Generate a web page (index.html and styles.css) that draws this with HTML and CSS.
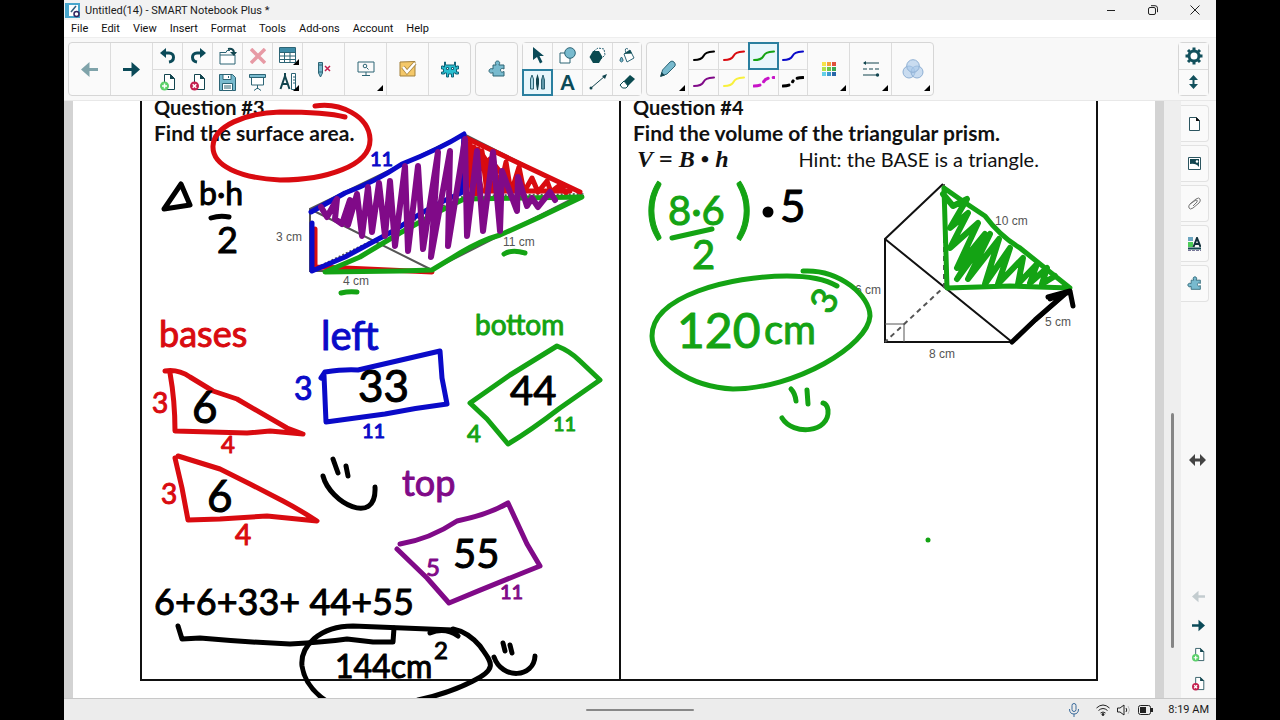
FILE: index.html
```html
<!DOCTYPE html>
<html lang="en">
    <head>
        <meta charset="utf-8">
        <title>Untitled(14) - SMART Notebook Plus *</title>
        <link rel="stylesheet" href="styles.css">
    </head>
    <body>
        <!-- shared icons -->
        <svg class="sprite" aria-hidden="true">
            <symbol id="arrow" viewBox="0 0 16 16"><path fill="currentColor" d="M0 6.500h8V1l8 7-8 7V9.500H0z"/></symbol>
            <symbol id="undo" viewBox="0 0 16 16"><path fill="none" stroke="currentColor" stroke-width="3" d="M4 5h5c6 0 6 8 0 9"/><path fill="currentColor" d="M0 5l6-5v10z"/></symbol>
            <symbol id="page" viewBox="0 0 16 18"><path fill="#fff" stroke="#12454f" d="M4.500 1.500h6l4 4v11h-10z"/><path fill="#12454f" d="M10 1l5 5h-5z"/></symbol>
            <symbol id="page-add" viewBox="0 0 16 18"><use href="#page" width="16" height="18"/><circle cx="4.500" cy="13" r="4.500" fill="#5bd06a"/><path stroke="#fff" stroke-width="1.500" d="M2 13h5M4.500 10.500v5"/></symbol>
            <symbol id="page-del" viewBox="0 0 16 18"><use href="#page" width="16" height="18"/><circle cx="4.500" cy="13" r="4.500" fill="#c4204f"/><path stroke="#fff" stroke-width="1.500" d="M2.700 11.200l3.600 3.600M6.300 11.200l-3.600 3.600"/></symbol>
            <symbol id="puzzle" viewBox="0 0 18 18"><path fill="#78bace" stroke="#2c6475" stroke-linejoin="round" d="M5 5h3.200C6.500 3 7.500 1 9.500 1s3 2 1.300 4H16v4c-2-1.200-3.500-.5-3.500 1.200S14 12.700 16 11.500V16H5v-3.500C3 14 1 12.500 1 10.800S3 8 5 9z"/></symbol>
            <symbol id="stroke" viewBox="0 0 22 12"><path fill="none" stroke="currentColor" stroke-linecap="round" d="M1 10c5 0 8-1 9.500-4S14 2 21 1.500"/></symbol>
            <symbol id="pencil" viewBox="0 0 18 18"><path fill="#78bace" stroke="#2c6475" d="M2 16l1.500-6L11 2q2-2 4 0t1 4L8 14z"/><path fill="#12454f" d="M1 17l1.500-5 3.500 3.500z"/></symbol>
        </svg>

        <div class="app">
            <header class="titlebar">
                <svg class="logo" width="15" height="15" viewBox="0 0 15 15"><rect x="1" y="1" width="13" height="13" fill="#fff" stroke="#49a6cc" stroke-width="2"/><path stroke="#49a6cc" stroke-width="2" d="M3 1v13"/><path stroke="#2f5c7d" stroke-width="1.500" d="M6 9l5-6"/><circle cx="11.500" cy="11" r="2.500" fill="#fff" stroke="#32235e" stroke-width="1.500"/></svg>
                <span class="title">Untitled(14) - SMART Notebook Plus *</span>
                <button aria-label="Minimize"><svg width="10" height="10"><path stroke="#222" d="M1 5.500h8"/></svg></button>
                <button aria-label="Restore"><svg width="10" height="10" fill="none" stroke="#222"><rect x=".5" y="2.500" width="7" height="7" rx="1.500"/><path d="M3 .7h4q2.500 0 2.500 2.500v4"/></svg></button>
                <button aria-label="Close"><svg width="10" height="10"><path stroke="#222" d="M.5.5l9 9M9.500.5l-9 9"/></svg></button>
            </header>

            <nav class="menu">
                <a href="#">File</a>
                <a href="#">Edit</a>
                <a href="#">View</a>
                <a href="#">Insert</a>
                <a href="#">Format</a>
                <a href="#">Tools</a>
                <a href="#">Add-ons</a>
                <a href="#">Account</a>
                <a href="#">Help</a>
            </nav>

            <div class="toolbar">
                <div class="group">
                    <button class="tall faded" aria-label="Previous page"><svg class="flip" width="17" height="17"><use href="#arrow"/></svg></button>
                    <button class="tall" aria-label="Next page"><svg width="17" height="17"><use href="#arrow"/></svg></button>
                    <div class="grid five">
                        <button aria-label="Undo"><svg width="16" height="16"><use href="#undo"/></svg></button>
                        <button aria-label="Redo"><svg class="flip" width="16" height="16"><use href="#undo"/></svg></button>
                        <button aria-label="Open"><svg width="18" height="18" fill="#fff" stroke="#2c6475"><path d="M1 5.500h6l1-2h3M1 5v12h15V8M1 8h15" /><path fill="none" stroke="#12454f" stroke-width="2" d="M9 2q5-1 6 3"/><path fill="#12454f" stroke="none" d="M11 5h7l-3 4z"/></svg></button>
                        <button aria-label="Delete"><svg width="16" height="16"><path stroke="#e79aa5" stroke-width="3.500" d="M1 1l14 14M15 1L1 15"/></svg></button>
                        <button class="more" aria-label="Table"><svg width="17" height="17"><path fill="#fff" stroke="#2c6475" d="M.5.5h16v15H.5zM.5 5.500h16M.5 9h16M.5 12.500h16M5.500 5v11M11 5v11"/><path fill="#3e8ba6" d="M1 1h15v4H1z"/></svg></button>
                        <button aria-label="Add page"><svg width="16" height="18"><use href="#page-add"/></svg></button>
                        <button aria-label="Delete page"><svg width="16" height="18"><use href="#page-del"/></svg></button>
                        <button aria-label="Save"><svg width="17" height="17"><path fill="#78bace" stroke="#2c6475" d="M.5.5h13l3 3v13H.5z"/><path fill="#fff" stroke="#2c6475" d="M4 .5h8v5H4zM3.500 9.500h10v7h-10z"/><path stroke="#2c6475" d="M9.500 2v2M5 12h7M5 14h7"/></svg></button>
                        <button aria-label="Screen shade"><svg width="17" height="17"><path fill="#fff" stroke="#2c6475" d="M2.500 3v8h12V3M8.500 11v4M5 16.500l3.500-2.500 3.500 2.500"/><path fill="#78bace" stroke="#2c6475" d="M.5.5h16v3H.5z"/></svg></button>
                        <button class="more" aria-label="Measurement tools"><svg width="18" height="18"><path fill="none" stroke="#12454f" stroke-width="2" d="M6 3L1.500 16M6 3l4.500 13M3 11h6M6 0v4"/><path fill="#fff" stroke="#2c6475" d="M12.500.5h4v16h-4zM14 4h2M14 7h2M14 10h2"/></svg></button>
                    </div>
                    <button class="tall" aria-label="Clear ink"><svg width="14" height="17"><path fill="#78bace" stroke="#2c6475" d="M1.500 3V1.500h4V12l-2 4-2-4zM1.500 4h4M1.500 11h4"/><path stroke="#c4204f" stroke-width="1.500" d="M8 5l5 5M13 5l-5 5"/></svg></button>
                    <button class="tall more" aria-label="Display"><svg width="18" height="16" fill="none" stroke="#2c6475"><path d="M1 1h16v10H1zM9 11v3M5 14.500h8"/><circle cx="8" cy="5" r="1.800"/><path d="M9.500 6.500l2 2"/></svg></button>
                    <button class="tall" aria-label="Activities"><svg width="18" height="18"><path fill="#f4c869" stroke="#a3813d" d="M1 2l15-.5V16H1z"/><path fill="none" stroke="#a3813d" stroke-width="4" d="M4 7l4 5 8-9"/><path fill="none" stroke="#fff" stroke-width="2.500" d="M4 7l4 5 8-9"/></svg></button>
                    <button class="tall" aria-label="Game"><svg width="18" height="17"><path fill="#29bfd0" stroke="#12647a" d="M3.500 3V1h1v3h9V1h1v5h1V5h2v3h-2v3h2v2h-3v-1h-2v4h-2v-3H7.500v3h-2v-4h-2v1h-3v-2h2V8h-2V5h2v1h1z"/><path fill="#fff" stroke="#12647a" d="M5.500 6.500h2v2h-2zM10.500 6.500h2v2h-2z"/></svg></button>
                </div>

                <div class="group">
                    <button class="tall" aria-label="Add-ons"><svg width="18" height="18"><use href="#puzzle"/></svg></button>
                </div>

                <div class="group">
                    <div class="grid four">
                        <button aria-label="Select"><svg width="12" height="17"><path fill="currentColor" d="M1 0l11 9H7.500l3 6-2.500 1.500-3-6.500L1 13z"/></svg></button>
                        <button aria-label="Shapes"><svg width="17" height="17" stroke="#2c6475"><path fill="#fff" d="M1 6h10v10H1z"/><circle cx="11" cy="6" r="5.300" fill="#78bace"/></svg></button>
                        <button aria-label="Polygons"><svg width="17" height="17"><path fill="#fff" stroke="#2c6475" stroke-dasharray="2 1" d="M5 4l4-3 6 1 1 6-5 5"/><path fill="#0b4a50" d="M4 4h6l3.500 6-3.500 6H4L.5 10z"/></svg></button>
                        <button aria-label="Fill"><svg width="16" height="17"><path fill="#fff" stroke="#2c6475" d="M5 7l6-4 4 8-7 4zM7 6q-2-6 2-4"/><path fill="#78bace" stroke="#2c6475" d="M2.500 10q3 4 0 5-3-1 0-5z"/><path fill="#0b4a50" d="M5 7l8-.500L11 3z"/></svg></button>
                        <button class="on" aria-label="Pens"><svg width="17" height="16"><path fill="#a7d3e0" stroke="#2c6475" d="M1.500 5L3 1l1.500 4v10h-3z"/><path fill="#12454f" d="M7 5l1.500-5L10 5v5l-1 6H8l-1-6z"/><path fill="#5f98a9" stroke="#2c6475" d="M12.500 6L14 1l1.500 5v9h-3z"/></svg></button>
                        <button class="letter" aria-label="Text">A</button>
                        <button aria-label="Line"><svg width="18" height="16"><path stroke="#12454f" d="M2 14L16 2"/><circle cx="2" cy="14" r="1.500" fill="#12454f"/><path fill="#12454f" d="M18 0l-2 5-3-3z"/></svg></button>
                        <button aria-label="Eraser"><svg width="16" height="14"><path fill="#0b4a50" d="M5 6l6-6 5 4-7 7z"/><path fill="#fff" stroke="#0b4a50" d="M5 6L1 10l2.500 3H7l2-2z"/></svg></button>
                    </div>
                </div>

                <div class="group">
                    <button class="tall more" aria-label="Pen type"><svg width="18" height="18"><use href="#pencil"/></svg></button>
                    <div class="grid four pens">
                        <button class="ink-black" aria-label="Black pen"><svg width="22" height="12"><use href="#stroke"/></svg></button>
                        <button class="ink-red" aria-label="Red pen"><svg width="22" height="12"><use href="#stroke"/></svg></button>
                        <button class="ink-green on" aria-label="Green pen"><svg width="22" height="12"><use href="#stroke"/></svg></button>
                        <button class="ink-blue" aria-label="Blue pen"><svg width="22" height="12"><use href="#stroke"/></svg></button>
                        <button class="ink-purple" aria-label="Purple pen"><svg width="22" height="12"><use href="#stroke"/></svg></button>
                        <button class="ink-yellow" aria-label="Yellow highlighter"><svg width="22" height="12"><use href="#stroke"/></svg></button>
                        <button class="ink-magenta dashed" aria-label="Magenta dashes"><svg width="22" height="12"><use href="#stroke"/></svg></button>
                        <button class="ink-black dashed dotted" aria-label="Black dashes"><svg width="22" height="12"><use href="#stroke"/></svg></button>
                    </div>
                    <button class="tall more" aria-label="Colour"><svg width="14" height="14"><path fill="#f7e34a" d="M0 0h4v4H0z"/><path fill="#f5a03c" d="M5 0h4v4H5z"/><path fill="#e0503c" d="M10 0h4v4h-4z"/><path fill="#b4e04a" d="M0 5h4v4H0z"/><path fill="#6cc644" d="M5 5h4v4H5z"/><path fill="#3da850" d="M10 5h4v4h-4z"/><path fill="#62cfe8" d="M0 10h4v4H0z"/><path fill="#3c9ad0" d="M5 10h4v4H5z"/><path fill="#2766a8" d="M10 10h4v4h-4z"/></svg></button>
                    <button class="tall more" aria-label="Line style"><svg width="18" height="16"><path stroke="#12454f" d="M2 2h15M1 14h14"/><path stroke="#12454f" stroke-dasharray="4 2" d="M1 8h16"/><path fill="#12454f" d="M1 2l3-2v4z"/><circle cx="15.500" cy="14" r="1.700" fill="#12454f"/></svg></button>
                    <button class="tall more" aria-label="Transparency"><svg width="22" height="20" fill="#a9c8ea" fill-opacity=".6" stroke="#8fb0d4"><circle cx="7" cy="13" r="6"/><circle cx="15" cy="13" r="6"/><circle cx="11" cy="7" r="6.300"/></svg></button>
                </div>

                <div class="group right">
                    <div class="grid one">
                        <button aria-label="Settings"><svg width="18" height="18" viewBox="-9 -9 18 18"><circle r="5" fill="#fff" stroke="#12505c" stroke-width="3"/><path stroke="#12505c" stroke-width="3" d="M0-8.500v3M0 8.500v-3M-8.500 0h3M8.500 0h-3M-6-6l2 2M6-6l-2 2M-6 6l2-2M6 6l-2-2"/></svg></button>
                        <button aria-label="Move toolbar"><svg width="9" height="14"><path fill="#12505c" d="M4.500 0L9 5H5.500v4H9l-4.500 5L0 9h3.500V5H0z"/></svg></button>
                    </div>
                </div>
            </div>

            <main class="workspace">
                <div class="gutter"></div>
                <div class="sheet">
                    <div class="worksheet">
                        <section class="cell">
                            <h2>Question #3</h2>
                            <h3>Find the surface area.</h3>
                        </section>
                        <section class="cell">
                            <h2>Question #4</h2>
                            <h3>Find the volume of the triangular prism.</h3>
                            <p><span class="formula"><i>V</i> = <i>B</i> • <i>h</i></span><span>Hint: the BASE is a triangle.</span></p>
                        </section>
                    </div>

                    <!-- figures and pen strokes lie over the worksheet -->
                    <svg class="drawing" viewBox="73 100 1082 597" preserveAspectRatio="xMinYMin meet">
                        <g class="figure">
                            <path d="M310 208L464 133 582 193 430 270H310zM310 208L430 268"/>
                            <path stroke-dasharray="2 2" d="M310 270L464 195 582 193"/>
                            <path class="solid" d="M943 183L885 238V341H1012L885 238M1012 341L1070 290"/>
                            <path stroke-dasharray="5 4" d="M944 183V286L885 341"/>
                            <path class="thin" d="M885 323h19v18"/>
                        </g>
                        <g class="label">
                            <text x="276" y="240">3 cm</text>
                            <text x="343" y="284">4 cm</text>
                            <text x="503" y="245">11 cm</text>
                            <text x="995" y="224">10 cm</text>
                            <text x="1045" y="325">5 cm</text>
                            <text x="929" y="357">8 cm</text>
                            <text x="855" y="293">6 cm</text>
                        </g>

                        <!-- question 3, the prism -->
                        <g class="pen ink-red">
                            <path d="M315 105C340 101 369 115 370 138C371 165 325 179 280 179C240 177 212 165 213 145C214 125 245 112 280 111C305 111 330 112 345 116"/>
                            <path d="M315 228V266L345 267 432 271"/>
                            <path d="M466 137L580 191M466 194L470 146 476 193 482 150 487 192 493 156 499 192 506 161 511 192 519 166 524 191 532 177 538 191 547 180 551 191 560 184 566 192"/>
                            <path d="M466 140L472 190M470 143L482 190M474 146L495 190M480 150L505 188M466 150V190M490 158L515 190M472 190H570M478 148V190M488 160V188"/>
                        </g>
                        <g class="pen ink-green">
                            <path d="M325 271L360 256 400 232 440 210 464 198 582 196 540 216 500 234Q482 239 460 252L432 269 400 270z"/>
                            <path d="M341 292Q349 290 357 291M504 253Q512 248 525 252"/>
                        </g>
                        <g class="pen ink-blue">
                            <path d="M311 211L345 192Q375 181 402 163Q440 148 464 133L461 192Q430 205 395 229L345 256 312 270V222"/>
                        </g>
                        <g class="pen thick ink-purple">
                            <path d="M321 206L327 216 337 198 335 218 342 223 350 199 348 224 357 193 362 235 368 186 372 231 379 182 385 235 390 180 395 245 405 165 408 250 418 165 423 248 438 151 431 256 450 150 448 245 465 138 467 235 477 150 483 230 493 151 500 230 502 170 517 210 518 176 527 205 532 197 538 206 550 191 555 199"/>
                        </g>
                        <g class="pen ink-black">
                            <path d="M164 208L181 183 190 204zM211 217Q220 214 229 216"/>
                        </g>

                        <!-- question 3, the nets -->
                        <g class="pen ink-red">
                            <path d="M165 370Q178 368 190 376L213 390Q225 394 237 398L287 427 303 433 270 430 247 432 175 430Q175 400 170 372"/>
                            <path d="M178 455L220 468 250 483 283 500Q300 509 317 520L267 515 220 518 188 519 182 487 175 457"/>
                        </g>
                        <g class="pen ink-blue"><path d="M321 377L325 371Q345 368 358 369L440 350 442 377 447 403Q415 407 385 413Q355 417 326 421L324 374"/></g>
                        <g class="pen ink-green"><path d="M470 402L510 374 557 345Q570 350 580 360L600 379 560 407Q530 430 508 443L487 418z"/></g>
                        <g class="pen ink-purple"><path d="M400 543Q430 538 457 520Q490 513 508 502L527 543 540 565Q495 583 449 602L427 577 397 548"/></g>
                        <g class="pen ink-black">
                            <path d="M323 475C330 502 377 526 375 486M333 458L338 472M346 465L348 475"/>
                            <path d="M178 625L182 638 200 637Q245 641 290 643Q325 641 347 638L373 641H393L394 627"/>
                            <path d="M458 635Q445 626 430 632M453 629L353 625C320 625 300 645 302 665Q305 685 325 699M418 699Q450 692 473 680C500 667 490 660 480 645Q468 631 453 628"/>
                            <path d="M494 656C502 679 534 677 535 655M503 642L505 650M510 644L512 652"/>
                        </g>

                        <!-- question 4 -->
                        <g class="pen ink-green">
                            <path d="M672 237L712 228"/>
                            <path d="M803 270C840 268 870 295 870 315C868 345 795 388 733 388C690 386 652 360 652 335C652 295 730 275 787 275Q820 275 837 285"/>
                            <path d="M791 388Q795 392 796 400M807 389L808 403M782 417C793 435 830 432 828 409Q827 403 823 402"/>
                            <path d="M944 187L947 287 1010 285 1070 287 1020 247Q1000 235 985 215Q965 202 944 187"/>
                            <path d="M928 539V539"/>
                        </g>
                        <g class="pen thick ink-green">
                            <path d="M943 193L953 205 967 198 950 227 968 212 950 247 978 222 957 267 985 233 957 278 990 233 968 278 999 238 985 283 1010 247 998 283 1023 257 1018 283 1037 263 1030 282 1047 267 1042 283 1055 275"/>
                        </g>
                        <g class="pen ink-black">
                            <path d="M1012 341L1035 319 1066 292M1048 296L1070 290 1073 305M1050 298L1070 291"/>
                            <circle class="dot" cx="768" cy="211" r="3"/>
                        </g>

                        <!-- handwriting -->
                        <g class="hand ink-black">
                            <text class="s32" x="199" y="204">b·h</text>
                            <text class="s36" x="217" y="252">2</text>
                            <text class="s44" x="192" y="422">6</text>
                            <text class="s44" x="207" y="511">6</text>
                            <text class="s44" x="358" y="401">33</text>
                            <text class="s40" x="510" y="404">44</text>
                            <text class="s40" x="453" y="567">55</text>
                            <text class="s36" x="154" y="614">6+6+33+ 44+55</text>
                            <text class="s32" x="335" y="677">144cm</text>
                            <text class="s24" x="434" y="658">2</text>
                            <text class="s44" x="780" y="221">5</text>
                        </g>
                        <g class="hand ink-red">
                            <text class="s36" x="159" y="346">bases</text>
                            <text class="s28" x="152" y="412">3</text>
                            <text class="s28" x="161" y="503">3</text>
                            <text class="s24" x="221" y="452">4</text>
                            <text class="s28" x="235" y="544">4</text>
                        </g>
                        <g class="hand ink-blue">
                            <text class="s20" x="370" y="165">11</text>
                            <text class="s40" x="321" y="349">left</text>
                            <text class="s32" x="294" y="399">3</text>
                            <text class="s20" x="362" y="437">11</text>
                        </g>
                        <g class="hand ink-green">
                            <text class="s28" x="475" y="334">bottom</text>
                            <text class="s24" x="467" y="441">4</text>
                            <text class="s20" x="553" y="430">11</text>
                            <text class="s64" x="646" y="230">(</text>
                            <text class="s40" x="668" y="224">8·6</text>
                            <text class="s64" x="735" y="230">)</text>
                            <text class="s40" x="692" y="268">2</text>
                            <text class="s48" x="677" y="347">120</text>
                            <text class="s40" x="764" y="343">cm</text>
                            <text class="s36" transform="translate(830 315) rotate(-60)">3</text>
                        </g>
                        <g class="hand ink-purple">
                            <text class="s36" x="402" y="495">top</text>
                            <text class="s24" x="426" y="575">5</text>
                            <text class="s20" x="500" y="598">11</text>
                        </g>
                    </svg>
                </div>
                <div class="gutter"></div>
                <div class="scroll"><div class="thumb"></div></div>

                <aside class="sidebar">
                    <button class="tab" aria-label="Page sorter"><svg width="11" height="14"><path fill="#fff" stroke="#2c5560" d="M.5.5h7l3 3v10H.5z"/><path fill="#111" d="M7 0l4 4H7z"/></svg></button>
                    <button class="tab" aria-label="Gallery"><svg width="13" height="13"><path fill="#fff" stroke="#2c5560" d="M.5.5h12v12H.5z"/><path fill="#12454f" d="M2 2h9v8Q8 6 2 7z"/><circle cx="9" cy="4.500" r="1.300" fill="#fff"/></svg></button>
                    <button class="tab" aria-label="Attachments"><svg width="13" height="13" fill="none" stroke="#777"><path d="M2 7l6-5q3-2 4 0t-1 4l-6 5q-3 2-4 0t1-4l6-4q2 0 1 2L5 9"/></svg></button>
                    <button class="tab" aria-label="Properties"><svg width="13" height="14"><path fill="#6ba5c0" d="M0 0h5v4H0z"/><path fill="#4ccc58" d="M0 5h5v5H0z"/><path fill="none" stroke="#12303a" stroke-width="2" d="M5.500 10L9 1l3.500 9M7 7h4"/><path stroke="#12454f" stroke-width="2" d="M0 11.500h13"/><path stroke="#779" stroke-dasharray="3 1" d="M0 13.500h13"/></svg></button>
                    <button class="tab" aria-label="Add-ons"><svg width="15" height="15"><use href="#puzzle"/></svg></button>
                    <button class="resize" aria-label="Resize side bar"><svg width="17" height="12"><path fill="#444" d="M0 6l6-6v4.500h5V0l6 6-6 6V7.500H6V12z"/></svg></button>
                    <div class="pager">
                        <button class="faded" aria-label="Previous page"><svg class="flip" width="13" height="13"><use href="#arrow"/></svg></button>
                        <button aria-label="Next page"><svg width="13" height="13"><use href="#arrow"/></svg></button>
                        <button aria-label="Add page"><svg width="13" height="15"><use href="#page-add"/></svg></button>
                        <button aria-label="Delete page"><svg width="13" height="15"><use href="#page-del"/></svg></button>
                    </div>
                </aside>
            </main>

            <footer class="statusbar">
                <span class="handle"></span>
                <div class="tray">
                    <svg width="10" height="14" fill="none" stroke="#3a6a9a"><rect x="3" y=".5" width="4" height="8" rx="2"/><path d="M.5 6q0 5 4.500 5t4.500-5M5 11v3"/></svg>
                    <svg class="wifi" width="14" height="12" fill="none" stroke="#222"><path d="M.5 4Q7-2 13.500 4M2.500 6.500q4.500-4 9 0M4.500 9q2.500-2 5 0"/><circle cx="7" cy="10.500" r="1" fill="#222"/></svg>
                    <svg width="14" height="12" fill="none" stroke="#222"><path d="M.5 4v4H3l4 3V1L3 4zM9 4q1.500 2 0 4"/><path stroke="#bbb" d="M11 2q3 4 0 8"/></svg>
                    <svg width="15" height="10"><rect x=".5" y=".5" width="12" height="9" rx="2" fill="none" stroke="#222"/><path fill="#222" d="M2 2h6v6H2zM13 3h2v4h-2z"/></svg>
                    <span class="clock">8:19 AM</span>
                </div>
            </footer>
        </div>
    </body>
</html>
```

FILE: styles.css
```css
* {
    box-sizing: border-box;
}

body {
    margin: 0;
    background-color: #000;
    font-family: Roboto, "Open Sans", sans-serif;
    font-size: 11px;
    color: #1a1a1a;
}

.app {
    display: flex;
    flex-direction: column;
    height: 100vh;
    margin: 0 64px;
    background-color: #f8f8f8;
}

.sprite {
    display: none;
}

button {
    display: flex;
    align-items: center;
    justify-content: center;
    padding: 0;
    border: none;
    background: none;
    color: #0b4a58;
    cursor: pointer;
}

svg {
    display: block;
}

.flip {
    transform: scaleX(-1);
}

.faded {
    color: #7fa3aa;
}

/* title and menu */
.titlebar {
    display: flex;
    flex: none;
    height: 20px;
    align-items: center;
    background-color: #f2f2f2;
}

.logo {
    margin: 0 5px 0 1px;
}

.title {
    flex: 1;
}

.titlebar button {
    width: 42px;
    height: 20px;
}

.menu {
    display: flex;
    flex: none;
    gap: 13px;
    height: 18px;
    align-items: center;
    padding: 0 7px;
    background-color: #fff;
    border-bottom: 1px solid #eee;
}

.menu a {
    color: #111;
    text-decoration: none;
}

/* toolbar */
.toolbar {
    display: flex;
    flex: none;
    gap: 4px;
    height: 63px;
    padding: 4px 7px 4px 4px;
    border-bottom: 1px solid #e8e8e8;
}

.group {
    display: flex;
    border: 1px solid #d6d6d6;
    border-radius: 4px;
    background-color: #fafafa;
}

.right {
    margin-left: auto;
}

.tall {
    width: 42px;
}

.tall:first-child {
    width: 41px;
}

.group > * + * {
    border-left: 1px solid #dcdcdc;
}

.grid {
    display: grid;
    grid-template-rows: 1fr 1fr;
    gap: 1px;
    background-color: #dcdcdc;
}

.five {
    grid-template-columns: repeat(5, 29px);
}

.four {
    grid-template-columns: repeat(3, 29px) 28px;
}

.one {
    grid-template-columns: 29px;
}

.grid button {
    background-color: #fafafa;
}

.grid .on {
    outline: 2px solid #2a7f9f;
    outline-offset: -1px;
    background-color: #e8f6fb;
    z-index: 1;
}

.more {
    position: relative;
}

.more::after {
    content: "";
    position: absolute;
    right: 3px;
    bottom: 4px;
    border-left: 6px solid transparent;
    border-bottom: 6px solid #000;
}

.letter {
    font-family: Lato, sans-serif;
    font-size: 20px;
    font-weight: 900;
}

.pens {
    stroke-width: 2px;
}

.dashed {
    stroke-width: 3px;
    stroke-dasharray: 6 5;
}

.dotted {
    stroke-dasharray: 6 5 1 5;
}

/* ink colours, used by the pens and by the strokes */
.ink-black {
    color: #000;
}

.ink-red {
    color: #d90b10;
}

.ink-green {
    color: #14a314;
}

.ink-blue {
    color: #0a0ac8;
}

.ink-purple {
    color: #800a88;
}

.ink-yellow {
    color: #f8f03c;
}

.ink-magenta {
    color: #c814c8;
}

/* page */
.workspace {
    display: flex;
    flex: 1;
    min-height: 0;
}

.gutter {
    width: 9px;
    background-color: #d3d3d3;
}

.sheet {
    position: relative;
    flex: 1;
    overflow: hidden;
    padding: 0 57px 17px 67px;
    background-color: #fff;
}

.worksheet {
    display: grid;
    grid-template-columns: 1fr 1fr;
    height: 100%;
    border: solid #111;
    border-width: 0 2px 2px;
}

.cell {
    padding: 0 12px;
    font-family: Lato, sans-serif;
    font-size: 20px;
    line-height: 26px;
    color: #111;
}

.cell + .cell {
    border-left: 2px solid #111;
}

.cell h2,
.cell h3,
.cell p {
    margin: 0;
    font-size: 20px;
    white-space: nowrap;
}

.cell h2 {
    margin-top: -7px;
}

.cell h3 {
    font-size: 21px;
}

.cell p {
    display: flex;
    gap: 70px;
    padding-left: 4px;
}

.formula {
    font-family: "Liberation Serif", serif;
    font-size: 24px;
    font-weight: bold;
}

.drawing {
    position: absolute;
    top: 0;
    left: 0;
    width: 100%;
}

.figure {
    fill: none;
    stroke: #555;
    stroke-width: 2px;
}

.solid {
    stroke: #111;
}

.thin {
    stroke-width: 1px;
}

.label {
    font-family: "Liberation Sans", sans-serif;
    font-size: 12px;
    fill: #555;
}

.pen {
    fill: none;
    stroke: currentColor;
    stroke-width: 5px;
    stroke-linecap: round;
    stroke-linejoin: round;
}

.thick {
    stroke-width: 6px;
}

.dot {
    fill: currentColor;
}

.hand {
    font-family: Lato, sans-serif;
    fill: currentColor;
    stroke: currentColor;
    stroke-width: 1px;
    stroke-linejoin: round;
}

.s20 { font-size: 20px; }
.s24 { font-size: 24px; }
.s28 { font-size: 28px; }
.s32 { font-size: 32px; }
.s36 { font-size: 36px; }
.s40 { font-size: 40px; }
.s44 { font-size: 44px; }
.s48 { font-size: 48px; }
.s64 { font-size: 64px; }

/* right edge */
.scroll {
    display: flex;
    align-items: flex-end;
    justify-content: center;
    width: 17px;
    padding-bottom: 50px;
    background-color: #eee;
}

.thumb {
    width: 3px;
    height: 43%;
    border-radius: 2px;
    background-color: #858585;
}

.sidebar {
    display: flex;
    flex-direction: column;
    gap: 3px;
    width: 35px;
    padding: 4px 7px 0 0;
}

.tab {
    height: 37px;
    border: 1px solid #e2e2e2;
    border-left: none;
    border-radius: 0 4px 4px 0;
    background-color: #fafafa;
}

.resize {
    margin: 149px 0 auto 5px;
}

.pager {
    display: flex;
    flex-direction: column;
    padding-left: 6px;
}

.pager button {
    height: 29px;
}

.pager .faded {
    color: #c3cccf;
}

/* status bar */
.statusbar {
    display: grid;
    grid-template-columns: 1fr 108px 1fr;
    flex: none;
    height: 22px;
    align-items: center;
    border-top: 1px solid #c8c8c8;
    background-color: #ececec;
}

.handle {
    grid-column: 2;
    height: 2px;
    border-radius: 1px;
    background-color: #888;
}

.tray {
    display: flex;
    gap: 7px;
    align-items: center;
    justify-content: flex-end;
    padding-right: 7px;
}

.wifi {
    margin-left: 10px;
}

.clock {
    margin-left: 8px;
}
```
